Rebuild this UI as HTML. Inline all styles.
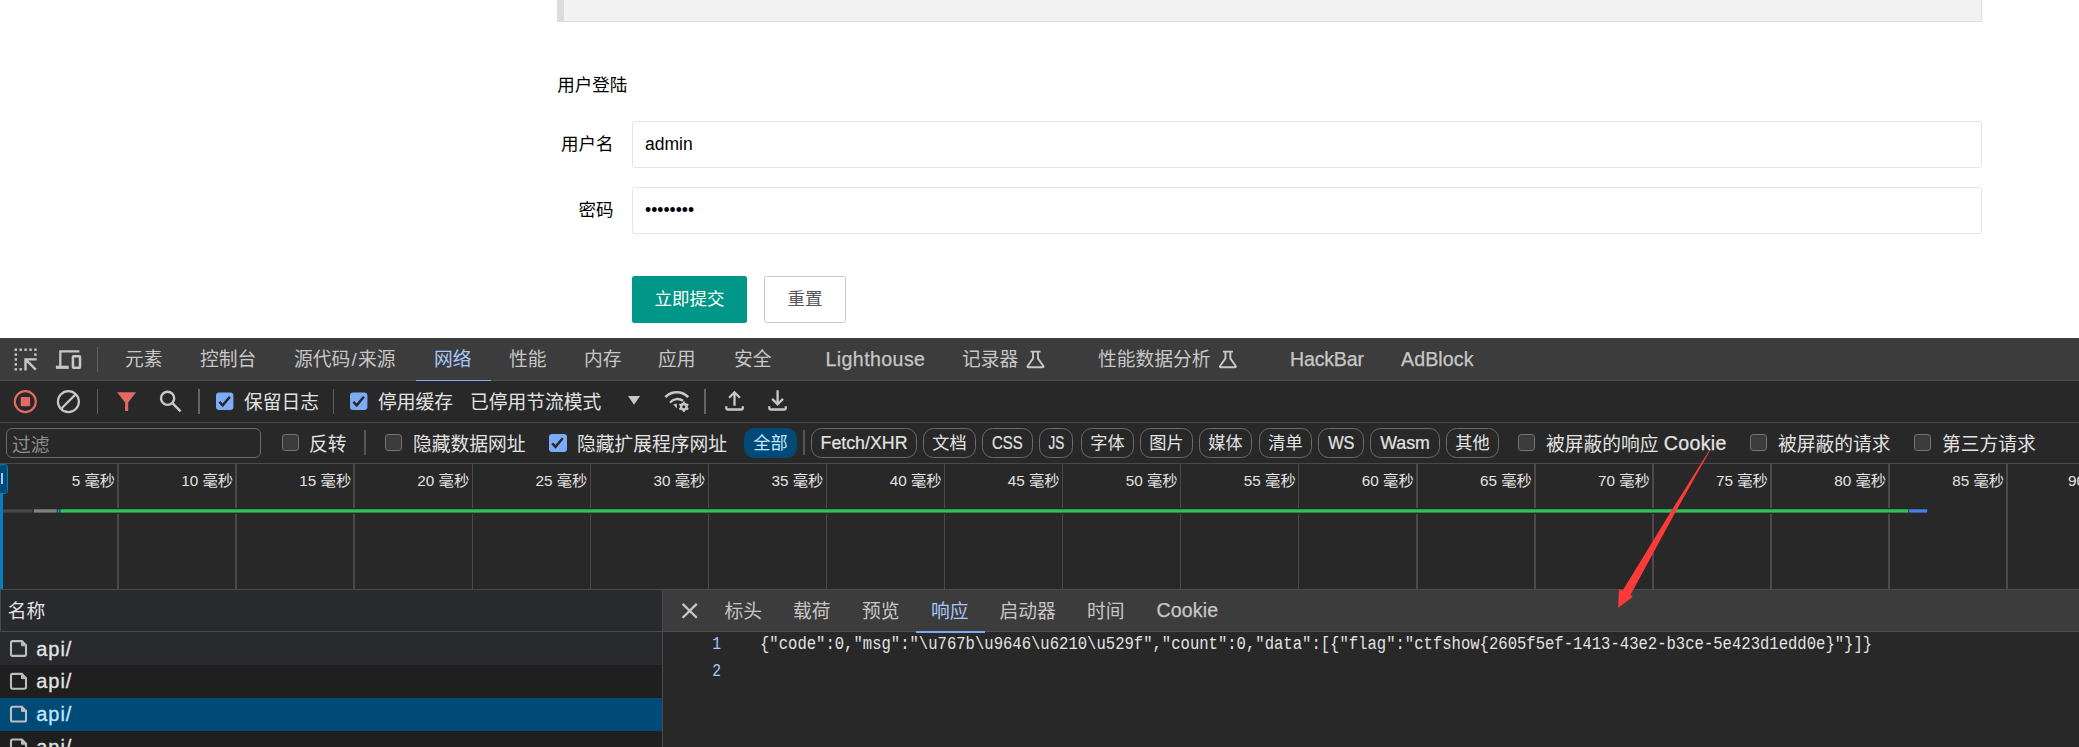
<!DOCTYPE html>
<html lang="zh-CN">
<head>
<meta charset="utf-8">
<title>用户登陆</title>
<style>
html,body{margin:0;padding:0}
body{width:2079px;height:747px;overflow:hidden;position:relative;background:#fff;
 font-family:"Liberation Sans","Noto Sans CJK SC",sans-serif;}
.a{position:absolute;white-space:nowrap}
/* ---------- page (layui form, dpr 1.25) ---------- */
.pg{font-size:17.5px;color:#000;line-height:25px}
.quote{left:557px;top:-40px;width:1417px;height:59.7px;background:#f2f2f2;border:1px solid #dcdcdc;border-left:7px solid #dcdcdc}
.inp{left:632px;width:1348px;height:44.6px;border:1px solid #e4e4e4;border-radius:2.5px;background:#fff}
.btn{top:276px;height:47px;line-height:47px;border-radius:2.5px;text-align:center;font-size:17.5px}
/* ---------- devtools ---------- */
.dt{font-size:18.75px;color:#e3e3e3;line-height:26px}
.tab{color:#c7c7c7;top:347.4px}
.tab.lat{top:346px}
.lat{font-size:19.6px;-webkit-text-stroke:.25px currentColor}
.sep{width:1px;background:#5e5e5e}
.cb{width:15.4px;height:15.4px;border:1.2px solid #757575;border-radius:3.2px;background:#3b3b3b;top:434px}
.cbc{width:17.6px;height:17.6px;border-radius:3.2px;background:#7cacf8}
.pill{top:428px;height:28px;border:1px solid #6a6a6a;border-radius:10.5px;font-size:17.2px;line-height:28px;text-align:center;color:#e3e3e3}
.lat2{font-size:17.8px;-webkit-text-stroke:.2px currentColor}
.sx{display:inline-block;position:relative;top:-.3px}
.ftxt{top:431.8px;color:#e3e3e3}
.grid{top:464px;width:1.56px;height:125px;background:#4a4a4a}
.tl{top:468.7px;font-size:15.3px;color:#e3e3e3;line-height:24px;text-align:right;width:110px}
.row{left:0;width:662px;height:33px}
.nm{-webkit-text-stroke:.3px currentColor;left:36.3px;font-size:20px;letter-spacing:.95px;color:#e3e3e3;line-height:26px}
.st{top:598.6px;color:#c7c7c7}
.st.lat{top:597px}
.ln{font-family:"Liberation Mono",monospace;font-size:18.8px;line-height:27px;color:#a8c7fa;width:22px;text-align:right;transform:scaleX(.78);transform-origin:100% 50%}
.code{font-family:"Liberation Mono",monospace;font-size:18.8px;line-height:27px;color:#e3e3e3;transform:scaleX(.8292);transform-origin:0 50%}
</style>
</head>
<body>

<!-- ================= PAGE ================= -->
<div class="a quote"></div>
<div class="a pg" style="left:557.3px;top:73px">用户登陆</div>

<div class="a pg" style="left:561px;top:132px">用户名</div>
<div class="a inp" style="top:121px"></div>
<div class="a pg" style="left:645px;top:132px">admin</div>

<div class="a pg" style="left:578.5px;top:198px">密码</div>
<div class="a inp" style="top:187px"></div>
<div class="a pg" style="left:645px;top:198px">••••••••</div>

<div class="a btn" style="left:632px;width:115px;background:#009688;color:#fff">立即提交</div>
<div class="a btn" style="left:764px;width:80px;height:45px;line-height:45px;border:1px solid #c9c9c9;color:#555;background:#fff">重置</div>

<!-- ================= DEVTOOLS ================= -->
<div class="a" style="left:0;top:338px;width:2079px;height:409px;background:#282828"></div>
<!-- tab bar -->
<div class="a" style="left:0;top:338px;width:2079px;height:42px;background:#3c3c3c;border-bottom:1px solid #4d4d4d"></div>
<!-- toolbar / filter bar borders -->
<div class="a" style="left:0;top:422px;width:2079px;height:1px;background:#4a4a4a"></div>
<div class="a" style="left:0;top:463px;width:2079px;height:1px;background:#4a4a4a"></div>

<div id="tabs" class="dt">
<div class="a tab" style="left:125px">元素</div>
<div class="a tab" style="left:200px">控制台</div>
<div class="a tab" style="left:294px">源代码<span style="padding:0 1.3px">/</span>来源</div>
<div class="a tab" style="left:434px;color:#a8c7fa">网络</div>
<div class="a" style="left:416px;top:379.8px;width:75px;height:1.3px;background:#7cacf8"></div>
<div class="a tab" style="left:509px">性能</div>
<div class="a tab" style="left:584px">内存</div>
<div class="a tab" style="left:658px">应用</div>
<div class="a tab" style="left:734px">安全</div>
<div class="a tab lat" style="left:825.5px;letter-spacing:.4px">Lighthouse</div>
<div class="a tab" style="left:962px">记录器</div>
<div class="a tab" style="left:1098px">性能数据分析</div>
<div class="a tab lat" style="left:1290px;letter-spacing:-.2px">HackBar</div>
<div class="a tab lat" style="left:1401px;letter-spacing:.1px">AdBlock</div>
</div>

<!-- toolbar row text -->
<div id="tb" class="dt">
<div class="a" style="left:244px;top:389.6px">保留日志</div>
<div class="a" style="left:378px;top:389.6px">停用缓存</div>
<div class="a" style="left:470px;top:389.6px">已停用节流模式</div>
</div>

<!-- filter row -->
<div id="flt" class="dt">
<div class="a" style="left:6px;top:428px;width:253px;height:28px;border:1px solid #6a6a6a;border-radius:6px"></div>
<div class="a" style="left:12px;top:432.6px;color:#8f8f8f">过滤</div>
<div class="a cb" style="left:282px"></div>
<div class="a ftxt" style="left:309px">反转</div>
<div class="a" style="left:364px;top:430px;height:25px;width:2px;background:#555"></div>
<div class="a cb" style="left:385px"></div>
<div class="a ftxt" style="left:413px">隐藏数据网址</div>
<div class="a cbc" style="left:549px;top:434px"></div>
<div class="a ftxt" style="left:577px">隐藏扩展程序网址</div>
<div class="a pill" style="left:744px;width:53px;height:30px;line-height:30px;border:0;background:#004a77;color:#c2e7ff">全部</div>
<div class="a" style="left:803.2px;top:430px;height:25px;width:1.7px;background:#555"></div>
<div class="a pill lat2" style="left:811px;width:104px"><span class="sx" id="sx_FetchXHR">Fetch/XHR</span></div>
<div class="a pill" style="left:923px;width:51px">文档</div>
<div class="a pill lat2" style="left:982px;width:49px"><span class="sx" id="sx_CSS" style="transform:scaleX(.84)">CSS</span></div>
<div class="a pill lat2" style="left:1039px;width:32px"><span class="sx" id="sx_JS" style="transform:scaleX(.76)">JS</span></div>
<div class="a pill" style="left:1081px;width:51px">字体</div>
<div class="a pill" style="left:1140px;width:51px">图片</div>
<div class="a pill" style="left:1199px;width:51px">媒体</div>
<div class="a pill" style="left:1259px;width:51px">清单</div>
<div class="a pill lat2" style="left:1318px;width:44px"><span class="sx" id="sx_WS" style="transform:scaleX(.92)">WS</span></div>
<div class="a pill lat2" style="left:1370px;width:68px"><span class="sx" id="sx_Wasm">Wasm</span></div>
<div class="a pill" style="left:1446px;width:51px">其他</div>
<div class="a cb" style="left:1518px"></div>
<div class="a ftxt" style="left:1546px">被屏蔽的响应 <span class="lat" style="letter-spacing:.35px;line-height:0;position:relative;top:-.9px">Cookie</span></div>
<div class="a cb" style="left:1750px"></div>
<div class="a ftxt" style="left:1778px">被屏蔽的请求</div>
<div class="a cb" style="left:1914px"></div>
<div class="a ftxt" style="left:1942px">第三方请求</div>
</div>

<!-- timeline overview -->
<div id="tlv">
<div class="a grid" style="left:117.34px"></div>
<div class="a tl" style="left:5.1px">5 毫秒</div>
<div class="a grid" style="left:235.40px"></div>
<div class="a tl" style="left:123.1px">10 毫秒</div>
<div class="a grid" style="left:353.46px"></div>
<div class="a tl" style="left:241.2px">15 毫秒</div>
<div class="a grid" style="left:471.52px"></div>
<div class="a tl" style="left:359.2px">20 毫秒</div>
<div class="a grid" style="left:589.58px"></div>
<div class="a tl" style="left:477.3px">25 毫秒</div>
<div class="a grid" style="left:707.64px"></div>
<div class="a tl" style="left:595.4px">30 毫秒</div>
<div class="a grid" style="left:825.70px"></div>
<div class="a tl" style="left:713.4px">35 毫秒</div>
<div class="a grid" style="left:943.76px"></div>
<div class="a tl" style="left:831.5px">40 毫秒</div>
<div class="a grid" style="left:1061.82px"></div>
<div class="a tl" style="left:949.5px">45 毫秒</div>
<div class="a grid" style="left:1179.88px"></div>
<div class="a tl" style="left:1067.6px">50 毫秒</div>
<div class="a grid" style="left:1297.94px"></div>
<div class="a tl" style="left:1185.7px">55 毫秒</div>
<div class="a grid" style="left:1416.00px"></div>
<div class="a tl" style="left:1303.7px">60 毫秒</div>
<div class="a grid" style="left:1534.06px"></div>
<div class="a tl" style="left:1421.8px">65 毫秒</div>
<div class="a grid" style="left:1652.12px"></div>
<div class="a tl" style="left:1539.8px">70 毫秒</div>
<div class="a grid" style="left:1770.18px"></div>
<div class="a tl" style="left:1657.9px">75 毫秒</div>
<div class="a grid" style="left:1888.24px"></div>
<div class="a tl" style="left:1776.0px">80 毫秒</div>
<div class="a grid" style="left:2006.30px"></div>
<div class="a tl" style="left:1894.0px">85 毫秒</div>
<div class="a tl" style="left:2068px;width:auto;text-align:left">90 毫秒</div>
<div class="a" style="left:3px;top:507.5px;width:1925px;height:6.5px;background:#282828"></div>
<div class="a" style="left:0;top:464px;width:3.1px;height:125px;background:#0a7cc0"></div>
<div class="a" style="left:-2px;top:464px;width:8px;height:28px;background:#004a77;border:1px solid #0a7cc0;border-radius:0 3.5px 3.5px 0"></div>
<div class="a" style="left:1px;top:473.3px;width:2.3px;height:10.7px;background:#a8c7fa"></div>
<div class="a" style="left:0;top:588.6px;width:2079px;height:1.4px;background:#4a4a4a"></div>
</div>

<!-- bottom panels -->
<div id="bot" class="dt">
<!-- left: request list -->
<div class="a" style="left:0;top:590px;width:662px;height:157px;background:#1f1f1f"></div>
<div class="a" style="left:0;top:590px;width:662px;height:41px;background:#282a2d;border-bottom:1px solid #4a4a4a;border-left:1.4px solid #4a4a4a;box-sizing:border-box;height:42px"></div>
<div class="a" style="left:7.7px;top:598.8px;color:#e3e3e3">名称</div>
<div class="a row" style="top:632px;background:#282a2d"></div>
<div class="a row" style="top:665px;background:#1f1f1f"></div>
<div class="a row" style="top:698px;background:#004a77"></div>
<div class="a row" style="top:731px;background:#1f1f1f;height:16px"></div>
<div class="a nm" style="top:635.5px">api/</div>
<div class="a nm" style="top:668.3px">api/</div>
<div class="a nm" style="top:701.1px;color:#c2e7ff">api/</div>
<div class="a nm" style="top:733.9px">api/</div>
<!-- splitter -->
<div class="a" style="left:662px;top:590px;width:1.4px;height:157px;background:#4a4a4a"></div>
<!-- right: response viewer -->
<div class="a" style="left:663.4px;top:590px;width:1416px;height:41px;background:#3c3c3c;border-bottom:1px solid #4f4f4f"></div>
<div class="a st" style="left:724.5px">标头</div>
<div class="a st" style="left:793px">载荷</div>
<div class="a st" style="left:862px">预览</div>
<div class="a st" style="left:931px;color:#a8c7fa">响应</div>
<div class="a" style="left:916.2px;top:630.5px;width:69.3px;height:2.4px;background:#7cacf8"></div>
<div class="a st" style="left:999.5px">启动器</div>
<div class="a st" style="left:1087px">时间</div>
<div class="a st lat" style="left:1156.4px;letter-spacing:.15px">Cookie</div>
<!-- code -->
<div class="a ln" style="left:699px;top:630.6px">1</div>
<div class="a ln" style="left:699px;top:657.6px">2</div>
<div class="a code" style="left:759.8px;top:630.6px">{"code":0,"msg":"\u767b\u9646\u6210\u529f","count":0,"data":[{"flag":"ctfshow{2605f5ef-1413-43e2-b3ce-5e423d1edd0e}"}]}</div>
</div>

<!-- devtools icons (page coordinates) -->
<svg class="a" style="left:0;top:338px" width="2079" height="409" viewBox="0 338 2079 409" fill="none" stroke-linecap="butt" stroke-linejoin="miter">
<!-- network overview bars -->
<rect x="3.1" y="509.3" width="29.3" height="3.3" fill="#484848"/>
<rect x="33.8" y="509.3" width="22.9" height="3.3" fill="#828282"/>
<rect x="57.6" y="509.3" width="1.8" height="3.3" fill="#0a9bd6"/>
<rect x="60.5" y="509.3" width="1847.5" height="3.3" fill="#34c05f"/>
<rect x="1908.6" y="509.3" width="18.6" height="3.3" fill="#4682e6"/>
<!-- inspect element -->
<g fill="#c7c7c7">
 <rect x="14.6" y="348.5" width="2.4" height="2.4"/><rect x="19.5" y="348.5" width="2.4" height="2.4"/><rect x="24.4" y="348.5" width="2.4" height="2.4"/><rect x="29.3" y="348.5" width="2.4" height="2.4"/><rect x="34.2" y="348.5" width="2.4" height="2.4"/>
 <rect x="14.6" y="353.4" width="2.4" height="2.4"/><rect x="14.6" y="358.3" width="2.4" height="2.4"/><rect x="14.6" y="363.2" width="2.4" height="2.4"/><rect x="14.6" y="368.1" width="2.4" height="2.4"/>
 <rect x="19.5" y="368.1" width="2.4" height="2.4"/>
 <rect x="34.2" y="353.4" width="2.4" height="2.4"/>
</g>
<path d="M36.6 359.4H25.5V370.4M25.8 359.7L35.8 369.7" stroke="#c7c7c7" stroke-width="2.4"/>
<!-- device toolbar -->
<path d="M79.4 351.3H60.3V366" stroke="#c7c7c7" stroke-width="2.3"/>
<path d="M55.9 367.3H68.7" stroke="#c7c7c7" stroke-width="3.2"/>
<rect x="72.9" y="356.3" width="7.1" height="11.4" rx=".8" stroke="#c7c7c7" stroke-width="2.5"/>
<path d="M97.5 347V372M97.5 389V414" stroke="#5e5e5e" stroke-width="1"/>
<!-- record / clear -->
<circle cx="25.3" cy="401.6" r="10.5" stroke="#e46962" stroke-width="2.2"/>
<rect x="20.7" y="396.9" width="9.4" height="9.4" rx=".8" fill="#e46962"/>
<circle cx="68.4" cy="401.6" r="10.5" stroke="#c7c7c7" stroke-width="2.2"/>
<path d="M61.2 408.8L75.6 394.4" stroke="#c7c7c7" stroke-width="2.2"/>
<!-- filter funnel -->
<path d="M117.1 392.2H136.1L128.2 402.4V411H125.1V402.4Z" fill="#e46962"/>
<!-- search -->
<circle cx="167.6" cy="398.3" r="6.6" stroke="#c7c7c7" stroke-width="2.4"/>
<path d="M172.4 403.1L180.6 411.4" stroke="#c7c7c7" stroke-width="2.5"/>
<path d="M199 389V414M705 389V414" stroke="#646464" stroke-width="2"/>
<path d="M333.5 389V414" stroke="#5e5e5e" stroke-width="1"/>
<!-- checked checkboxes -->
<rect x="216" y="392.6" width="17.4" height="17.4" rx="3.2" fill="#7cacf8"/>
<path d="M219.4 401.9L222.7 405.3L229.9 396.8" stroke="#282828" stroke-width="2.5"/>
<rect x="350" y="392.6" width="17.4" height="17.4" rx="3.2" fill="#7cacf8"/>
<path d="M353.4 401.9L356.7 405.3L363.9 396.8" stroke="#282828" stroke-width="2.5"/>
<!-- dropdown arrow -->
<path d="M628 396H640.1L634.05 404.7Z" fill="#c7c7c7"/>
<!-- network conditions (wifi + gear) -->
<path d="M665.4 397.2A15.5 15.5 0 0 1 688.2 397.2" stroke="#c7c7c7" stroke-width="2.6"/>
<path d="M670 402.6A9.5 9.5 0 0 1 683 400.8" stroke="#c7c7c7" stroke-width="2.3"/>
<path d="M673.2 404.6L676.9 403.4V408.6Z" fill="#c7c7c7"/>
<circle cx="683.8" cy="406.8" r="2.9" stroke="#c7c7c7" stroke-width="2.2"/>
<path d="M683.8 401.6V412M679.3 404.2L688.3 409.4M679.3 409.4L688.3 404.2" stroke="#c7c7c7" stroke-width="1.9"/>
<circle cx="683.8" cy="406.8" r="1.5" fill="#282828"/>
<!-- import / export -->
<path d="M734.5 405.8V392M729.1 397.8L734.5 392.3L739.9 397.8" stroke="#c7c7c7" stroke-width="2.3"/>
<path d="M726.3 406.2V408.3Q726.3 409.5 727.5 409.5H741.6Q742.8 409.5 742.8 408.3V406.2" stroke="#c7c7c7" stroke-width="2.3"/>
<path d="M777.6 390.3V404.4M772.2 398.9L777.6 404.4L783 398.9" stroke="#c7c7c7" stroke-width="2.3"/>
<path d="M769.3 406.2V408.3Q769.3 409.5 770.5 409.5H784.6Q785.8 409.5 785.8 408.3V406.2" stroke="#c7c7c7" stroke-width="2.3"/>
<!-- experiment flasks -->
<g stroke="#c7c7c7" stroke-width="1.9">
 <path d="M1030.5 351.6H1040.6M1033.05 351.6V358.4L1027.7 365.9Q1026.9 367.3 1028.6 367.3H1042.4Q1044.1 367.3 1043.3 365.9L1037.95 358.4V351.6"/>
 <g transform="translate(192.4 0)"><path d="M1030.5 351.6H1040.6M1033.05 351.6V358.4L1027.7 365.9Q1026.9 367.3 1028.6 367.3H1042.4Q1044.1 367.3 1043.3 365.9L1037.95 358.4V351.6"/></g>
</g>
<!-- filter-row checked box -->
<path d="M552.2 443.4L555.5 446.8L562.7 438.3" stroke="#282828" stroke-width="2.5"/>
<!-- request list file icons -->
<g stroke="#bdbdbd" stroke-width="2.1">
 <g transform="translate(0 0)"><path d="M12.6 641.1H21.9L26 645.3V654.3Q26 655.9 24.4 655.9H12.6Q11 655.9 11 654.3V642.7Q11 641.1 12.6 641.1Z"/><path d="M21.5 641.1V645.8H26Z" fill="#bdbdbd" stroke-width="1"/></g>
 <g transform="translate(0 32.8)"><path d="M12.6 641.1H21.9L26 645.3V654.3Q26 655.9 24.4 655.9H12.6Q11 655.9 11 654.3V642.7Q11 641.1 12.6 641.1Z"/><path d="M21.5 641.1V645.8H26Z" fill="#bdbdbd" stroke-width="1"/></g>
 <g transform="translate(0 65.6)"><path d="M12.6 641.1H21.9L26 645.3V654.3Q26 655.9 24.4 655.9H12.6Q11 655.9 11 654.3V642.7Q11 641.1 12.6 641.1Z"/><path d="M21.5 641.1V645.8H26Z" fill="#bdbdbd" stroke-width="1"/></g>
 <g transform="translate(0 98.4)"><path d="M12.6 641.1H21.9L26 645.3V654.3Q26 655.9 24.4 655.9H12.6Q11 655.9 11 654.3V642.7Q11 641.1 12.6 641.1Z"/><path d="M21.5 641.1V645.8H26Z" fill="#bdbdbd" stroke-width="1"/></g>
</g>
<!-- close (x) -->
<path d="M682.6 603.9L696.8 617.7M696.8 603.9L682.6 617.7" stroke="#c7c7c7" stroke-width="2.3"/>
</svg>

<!-- red annotation arrow -->
<svg class="a" style="left:1600px;top:440px" width="130" height="180" viewBox="1600 440 130 180">
<polygon points="1709.4,450 1671.9,510 1622.7,590.6 1619,589.1 1618.1,607.9 1632.8,596.8 1630.4,595 1676.6,510 1710.1,450.4" fill="#fd3939"/>
</svg>

</body>
</html>
